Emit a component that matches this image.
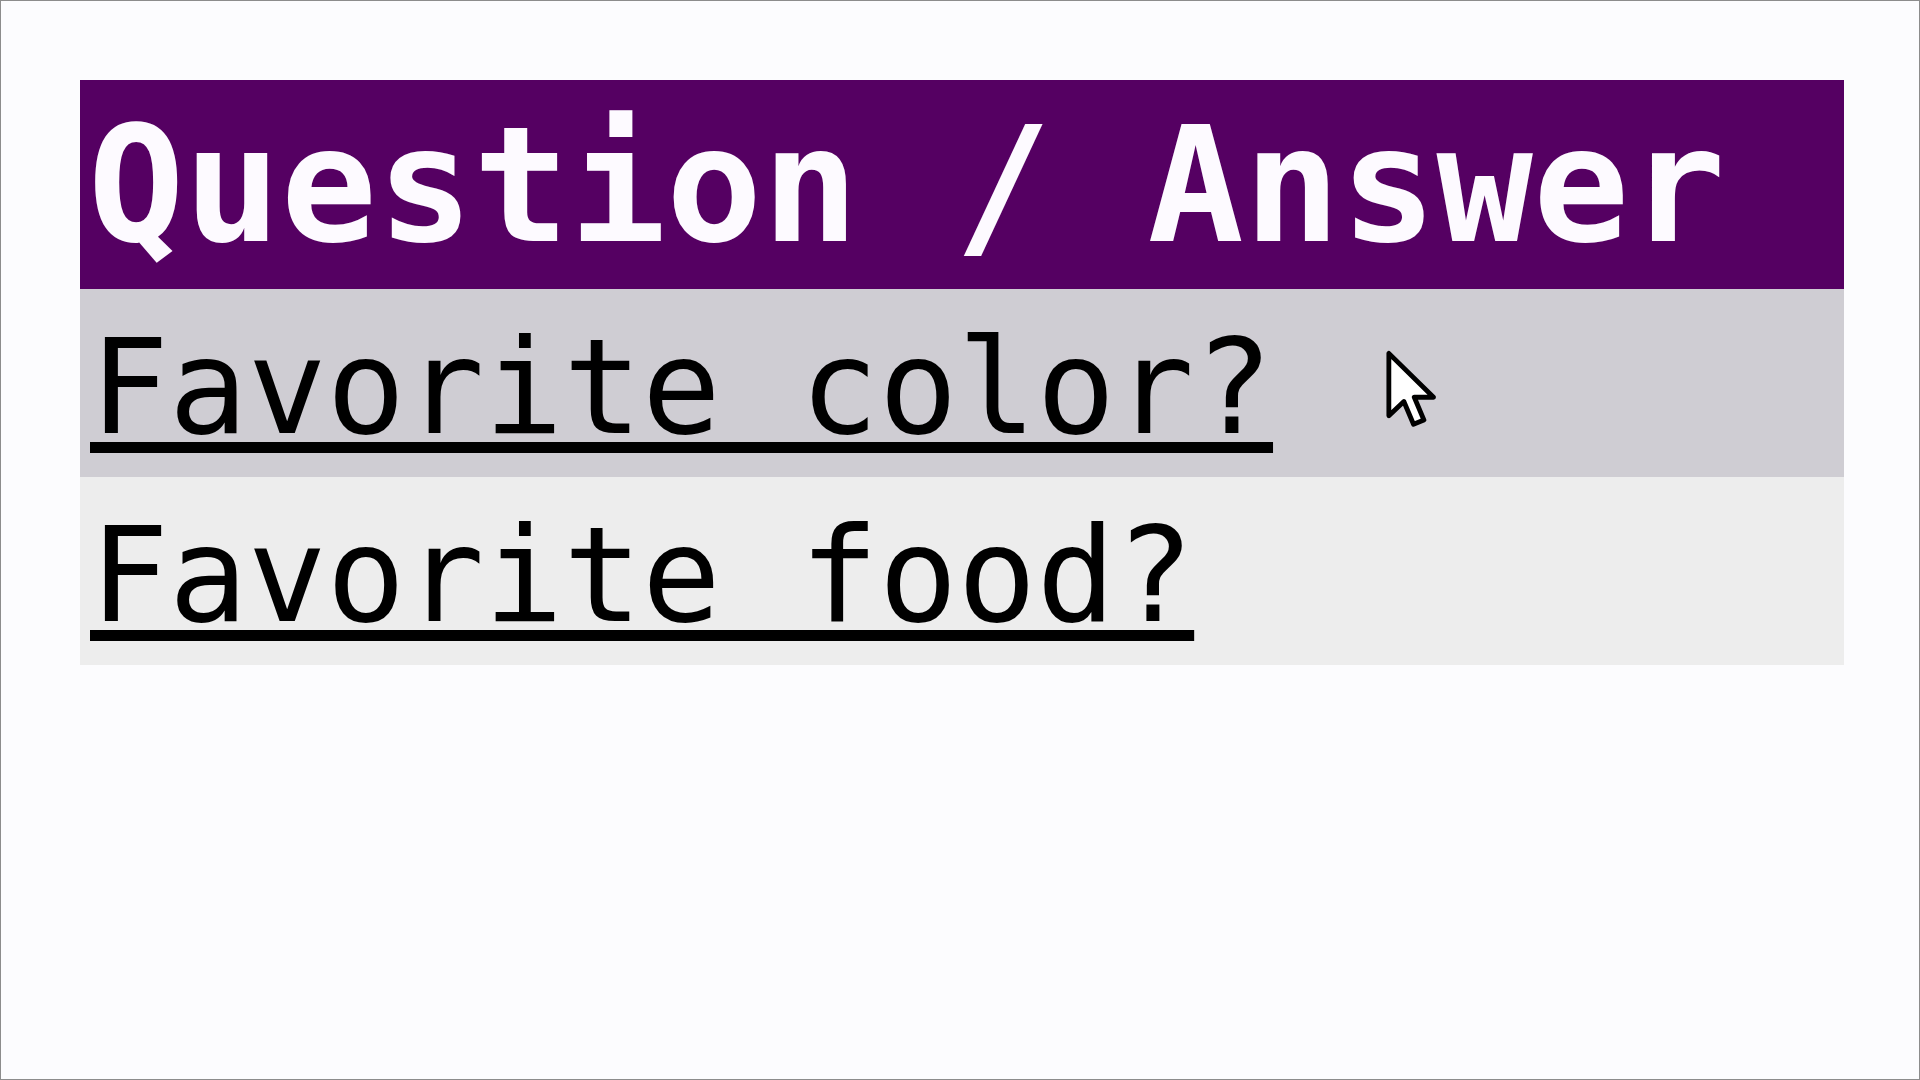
import React from "react";

function Cursor() {
  return (
    <svg
      className="absolute left-[1305px] top-[60px]"
      width="52"
      height="80"
      viewBox="-1 -1 13.5 20.5"
      fill="none"
    >
      <path
        d="M0 0 L0 16.2 L3.9 12.5 L6.4 18.4 L9.1 17.3 L6.6 11.4 L11.6 11.4 Z"
        fill="#ffffff"
        stroke="#000000"
        strokeWidth="1.25"
        strokeLinejoin="round"
      />
    </svg>
  );
}

export default function App() {
  const mono = "font-['DejaVu_Sans_Mono','Liberation_Mono',monospace]";
  return (
    <div className="w-[1920px] h-[1080px] bg-[#fcfcfe] border border-[#8c8c8c] box-border pt-[79px] pl-[79px] overflow-hidden">
      <div className={`w-[1764px] ${mono}`}>
        <div className="h-[209px] bg-[#550062] pl-[8px] pt-[26px]">
          <span className="block text-[160px] leading-none font-bold text-[#fdfaff] whitespace-pre">
            Question / Answer
          </span>
        </div>
        <div className="relative h-[188px] bg-[#cfcdd3] pl-[10px] pt-[33px]">
          <a
            href="#"
            className="text-[131px] leading-none text-black underline decoration-[11px] underline-offset-[9px] whitespace-pre"
          >
            Favorite color?
          </a>
          <Cursor />
        </div>
        <div className="h-[188px] bg-[#ededed] pl-[10px] pt-[33px]">
          <a
            href="#"
            className="text-[131px] leading-none text-black underline decoration-[11px] underline-offset-[9px] whitespace-pre"
          >
            Favorite food?
          </a>
        </div>
      </div>
    </div>
  );
}
